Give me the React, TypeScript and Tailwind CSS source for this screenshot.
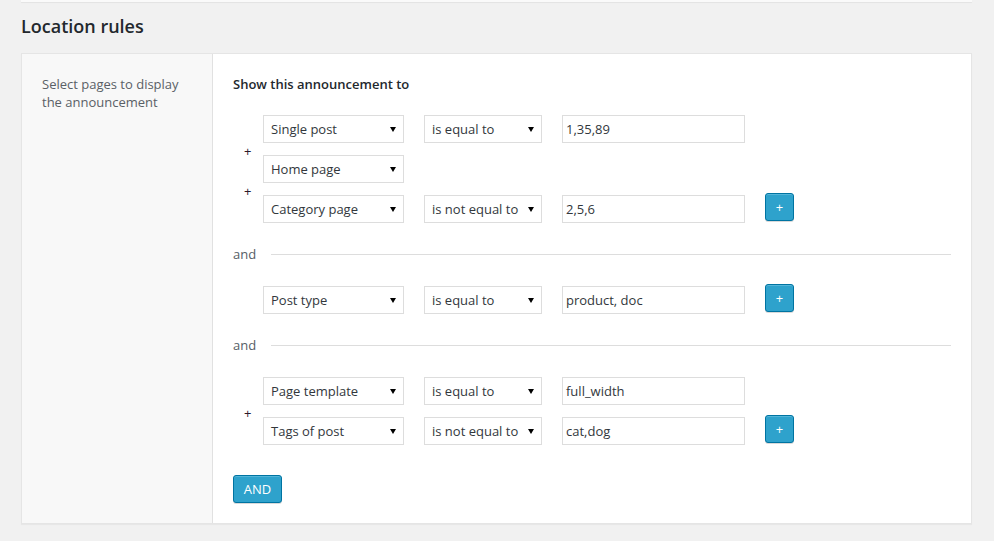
import React from "react";

function Arrow() {
  return (
    <svg width="6" height="5" viewBox="0 0 6 5" className="shrink-0">
      <polygon points="0,0 6,0 3,5" fill="#000" />
    </svg>
  );
}

function Select({ label, w }: { label: string; w: string }) {
  return (
    <div
      className={`${w} h-[28px] shrink-0 border border-[#dddddd] bg-white flex items-center justify-between pl-[7px] pr-[7px] text-[13px] leading-[26px] text-[#32373c]`}
    >
      <span className="whitespace-nowrap">{label}</span>
      <Arrow />
    </div>
  );
}

function TextInput({ value }: { value: string }) {
  return (
    <div className="w-[183px] h-[28px] shrink-0 border border-[#dddddd] bg-white pl-[3px] text-[13px] leading-[26px] text-[#32373c] whitespace-nowrap">
      {value}
    </div>
  );
}

function PlusButton() {
  return (
    <div className="w-[29px] h-[28px] -mt-[2px] shrink-0 rounded-[3px] border border-[#0074a2] bg-[#2ea2cc] shadow-[inset_0_1px_0_rgba(120,200,230,0.5),0_1px_0_rgba(0,0,0,0.15)] flex items-center justify-center text-white text-[13px] leading-none">
      +
    </div>
  );
}

type RowProps = {
  a: string;
  b?: string;
  v?: string;
  plus?: boolean;
};

function Row({ a, b, v, plus }: RowProps) {
  return (
    <div className="flex items-start pl-[30px] h-[28px] gap-[20px]">
      <Select label={a} w="w-[141px]" />
      {b && <Select label={b} w="w-[118px]" />}
      {v !== undefined && <TextInput value={v} />}
      {plus && <PlusButton />}
    </div>
  );
}

function Sep() {
  return (
    <div className="h-[12px] pl-[11px] text-[13px] leading-[12px] text-[#2a1a2a] pt-[2px] overflow-visible">
      +
    </div>
  );
}

function AndDivider() {
  return (
    <div className="mt-[22px] mb-[23px] h-[18px] flex items-center">
      <span className="text-[13px] leading-[18px] text-[#555d66]">and</span>
      <div className="ml-[15px] flex-1 h-px bg-[#dddddd]" />
    </div>
  );
}

export default function App() {
  return (
    <div className="min-h-[541px] bg-[#f1f1f1] font-['Open_Sans',sans-serif] pl-[21px] pr-[22px]">
      <div className="h-[2px] bg-[#fafafa] shadow-[0_1px_1px_rgba(0,0,0,0.06)]" />
      <h2 className="mt-[12px] text-[18px] leading-[24px] font-semibold text-[#23282d]">
        Location rules
      </h2>
      <div className="mt-[15px] flex border border-[#e5e5e5] bg-white shadow-[0_1px_1px_rgba(0,0,0,0.04)]">
        <div className="w-[191px] shrink-0 bg-[#f8f8f8] border-r border-[#e1e1e1] pt-[21px] pl-[20px] pr-[20px]">
          <p className="text-[13px] leading-[18px] text-[#5a6066]">
            Select pages to display the announcement
          </p>
        </div>
        <div className="flex-1 pt-[21px] pl-[20px] pr-[20px] pb-[20px]">
          <p className="text-[13px] leading-[18px] font-semibold text-[#23282d]">
            Show this announcement to
          </p>
          <div className="mt-[22px] flex flex-col">
            <Row a="Single post" b="is equal to" v="1,35,89" />
            <Sep />
            <Row a="Home page" />
            <Sep />
            <Row a="Category page" b="is not equal to" v="2,5,6" plus />
          </div>
          <AndDivider />
          <div className="flex flex-col">
            <Row a="Post type" b="is equal to" v="product, doc" plus />
          </div>
          <AndDivider />
          <div className="flex flex-col">
            <Row a="Page template" b="is equal to" v="full_width" />
            <Sep />
            <Row a="Tags of post" b="is not equal to" v="cat,dog" plus />
          </div>
          <div className="mt-[30px] flex">
            <div className="h-[28px] w-[49px] rounded-[3px] border border-[#0074a2] bg-[#2ea2cc] shadow-[inset_0_1px_0_rgba(120,200,230,0.5),0_1px_0_rgba(0,0,0,0.15)] flex items-center justify-center text-white text-[13px] leading-none">
              AND
            </div>
          </div>
        </div>
      </div>
    </div>
  );
}
